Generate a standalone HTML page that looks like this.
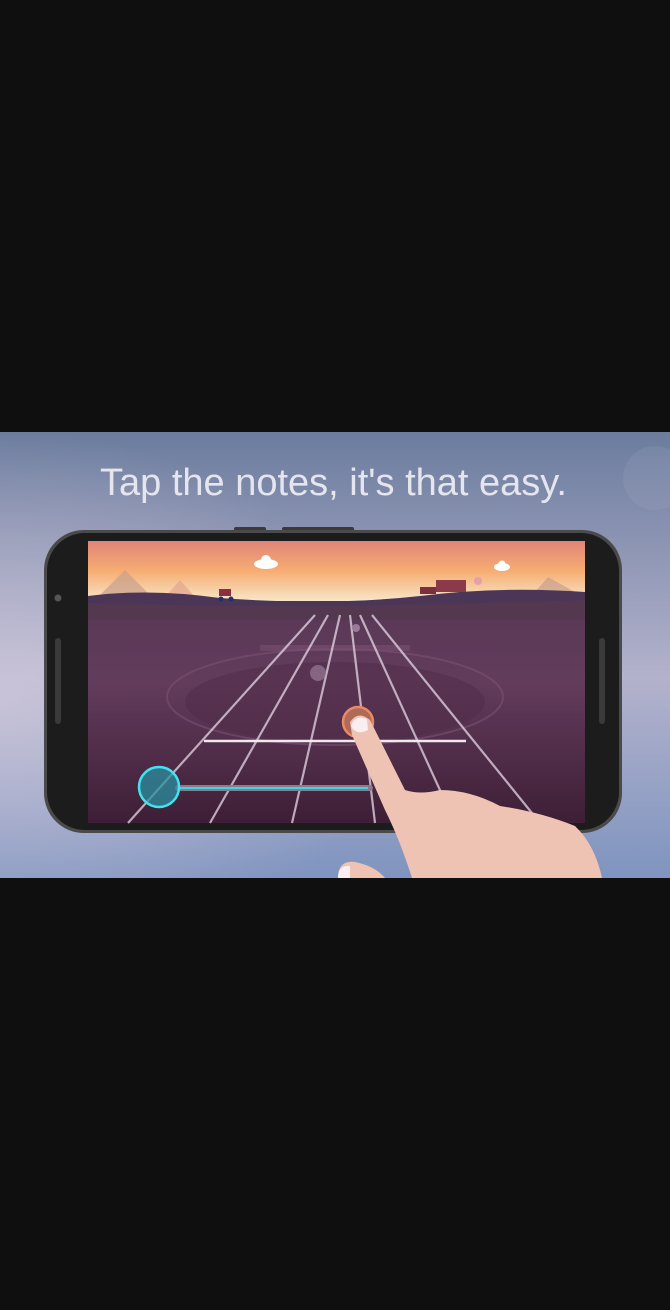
<!DOCTYPE html>
<html><head><meta charset="utf-8"><style>
html,body{margin:0;padding:0;background:#0f0f0f;width:670px;height:1310px;overflow:hidden}
svg{position:absolute;left:0;top:432px}
</style></head><body>
<svg width="670" height="446" viewBox="0 432 670 446" xmlns="http://www.w3.org/2000/svg">
<defs>
<linearGradient id="bg" x1="0" y1="0" x2="0" y2="1">
<stop offset="0" stop-color="#6c7c9e"/><stop offset="0.55" stop-color="#b3b2cc"/><stop offset="1" stop-color="#7f94bf"/></linearGradient>
<linearGradient id="sky" x1="0" y1="0" x2="0" y2="1">
<stop offset="0" stop-color="#e08478"/><stop offset="0.5" stop-color="#f6ad72"/><stop offset="1" stop-color="#f7e6c8"/></linearGradient>
<linearGradient id="gr" x1="0" y1="0" x2="0" y2="1">
<stop offset="0" stop-color="#4f3550"/><stop offset="0.5" stop-color="#633c5c"/><stop offset="1" stop-color="#3e1e36"/></linearGradient>
<radialGradient id="side" cx="0" cy="0.6" r="0.6"><stop offset="0" stop-color="#d8cfe0" stop-opacity=".6"/><stop offset="1" stop-color="#d8cfe0" stop-opacity="0"/></radialGradient>
</defs>
<rect x="0" y="432" width="670" height="446" fill="url(#bg)"/>
<rect x="0" y="432" width="670" height="446" fill="url(#side)"/>
<circle cx="655" cy="478" r="32" fill="#fff" opacity=".06"/>
<text x="100" y="495" textLength="467" lengthAdjust="spacingAndGlyphs" font-family="Liberation Sans, sans-serif" font-size="38" fill="#eeedf3" opacity=".92">Tap the notes, it's that easy.</text>
<rect x="234" y="527" width="32" height="6" rx="2" fill="#3a3a3a"/>
<rect x="282" y="527" width="72" height="6" rx="2" fill="#3a3a3a"/>
<rect x="44" y="530" width="578" height="303" rx="40" fill="#4a4a4a"/>
<rect x="47" y="533" width="572" height="297" rx="38" fill="#1c1c1c"/>
<circle cx="58" cy="598" r="3.5" fill="#555"/>
<rect x="55" y="638" width="6" height="86" rx="3" fill="#3a3a3a"/>
<rect x="599" y="638" width="6" height="86" rx="3" fill="#3a3a3a"/>
<rect x="88" y="541" width="497" height="282" fill="url(#gr)"/>
<rect x="88" y="541" width="497" height="60" fill="url(#sky)"/>
<polygon points="100,595 125,570 150,595" fill="#c9a08c" opacity=".7"/>
<polygon points="165,597 180,580 195,597" fill="#e3a58f" opacity=".7"/>
<polygon points="535,592 548,577 575,592" fill="#c9a08c" opacity=".7"/>
<path d="M88 596 Q150 588 220 598 Q330 606 420 596 Q500 586 585 592 L585 612 L88 612Z" fill="#4c3658"/>
<path d="M88 603 Q300 610 585 600 L585 620 L88 620Z" fill="#54384f"/>
<g fill="#fff"><ellipse cx="266" cy="564" rx="12" ry="5"/><circle cx="266" cy="560" r="5"/><ellipse cx="502" cy="567" rx="8" ry="4"/><circle cx="502" cy="564" r="3.5"/></g>
<rect x="219" y="589" width="12" height="7" fill="#8a3040"/><circle cx="221" cy="599" r="2.5" fill="#203070"/><circle cx="231" cy="599" r="2.5" fill="#203070"/>
<rect x="436" y="580" width="30" height="12" fill="#8a3a48"/><rect x="420" y="587" width="16" height="7" fill="#7a3040"/><circle cx="478" cy="581" r="4" fill="#e4a0a8"/>
<ellipse cx="335" cy="697" rx="168" ry="48" fill="none" stroke="#7a5273" stroke-width="2" opacity=".6"/>
<ellipse cx="335" cy="702" rx="150" ry="40" fill="#4e2c48" opacity=".5"/>
<rect x="260" y="645" width="150" height="6" fill="#7a5072" opacity=".6"/>
<g stroke="#e6d8e6" stroke-width="2.2" opacity=".75">
<line x1="128" y1="823" x2="315" y2="615"/><line x1="210" y1="823" x2="328" y2="615"/><line x1="292" y1="823" x2="340" y2="615"/><line x1="375" y1="823" x2="350" y2="615"/><line x1="455" y1="823" x2="360" y2="615"/><line x1="540" y1="823" x2="372" y2="615"/></g>
<line x1="204" y1="741" x2="466" y2="741" stroke="#f0e8f0" stroke-width="2.5"/>
<circle cx="318" cy="673" r="8" fill="#9a7a98" opacity=".7"/><circle cx="356" cy="628" r="4" fill="#9a7a98"/>
<line x1="178" y1="788" x2="370" y2="788" stroke="#8a7a90" stroke-width="6" stroke-linecap="round"/>
<line x1="178" y1="788" x2="368" y2="788" stroke="#3fd6d8" stroke-width="2"/>
<circle cx="159" cy="787" r="20" fill="#2a8fa0" fill-opacity=".75" stroke="#3fe4f0" stroke-width="2.5"/>
<circle cx="358" cy="722" r="15" fill="#b06a58" stroke="#e88a66" stroke-width="2.5"/>
<path d="M350 722 Q358 710 370 720 L405 790 Q420 795 440 790 Q470 790 500 806 Q540 812 575 826 Q595 845 602 878 L412 878 Q400 840 385 810 L352 735 Z" fill="#efc3b3"/>
<path d="M351 726 Q355 714 367 719 L368 730 Q356 736 351 726Z" fill="#fbeef0"/>
<path d="M338 878 Q338 860 355 862 Q375 866 385 878Z" fill="#efc3b3"/>
<path d="M338 878 Q338 865 350 866 L350 878Z" fill="#fbeef0"/>
</svg>
</body></html>
